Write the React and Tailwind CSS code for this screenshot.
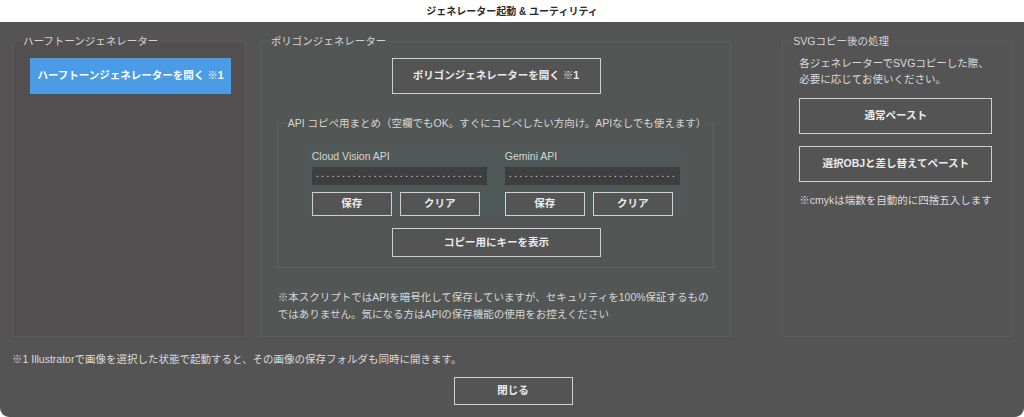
import React from 'react';

const font = { fontFamily: '"Liberation Sans", "Noto Sans CJK JP", sans-serif' };

const Btn = ({ children, className = '' }) => (
    <button className={`border border-[#cfcfcf] bg-[#545454] text-[10.5px] text-[#ececec] font-semibold flex items-center justify-center whitespace-nowrap ${className}`}>
        {children}
    </button>
);

const KeyField = ({ label }) => (
    <div className="w-[175px] flex flex-col">
        <div className="h-[19px] pt-[1px] text-[10.5px] text-[#d6d6d6] leading-[14px]">{label}</div>
        <div className="h-[18px] bg-[#3e3e3e] overflow-hidden whitespace-nowrap text-[11px] leading-[13px] text-[#d8d8d8] tracking-[2.2px] pl-[4px]">
            {'.'.repeat(32)}
        </div>
        <div className="flex gap-2 mt-[7px]">
            <Btn className="w-[80px] h-[24px]">保存</Btn>
            <Btn className="w-[80px] h-[24px]">クリア</Btn>
        </div>
    </div>
);

export default function App() {
    return (
        <div className="w-[1024px] h-[417px] bg-white overflow-hidden" style={font}>
            <div className="h-[22px] flex items-center justify-center text-[10px] font-bold text-[#2a2a2a]">
                ジェネレーター起動 &amp; ユーティリティ
            </div>
            <div className="h-[395px] bg-[#545454] rounded-b-[9px] px-3 pt-[12px] text-[#dcdcdc] text-[10.5px]">
                <div className="flex h-[303px]">
                    <fieldset className="w-[234px] border border-[#5e5a5b] bg-[#534f50]">
                        <legend className="ml-[9px] px-[1px] leading-[15px] text-[#d4d4d4]">ハーフトーンジェネレーター</legend>
                        <div className="pl-[17px] pt-[9px]">
                            <button className="w-[201px] h-[36px] bg-[#4b9be7] text-white font-semibold">
                                ハーフトーンジェネレーターを開く ※1
                            </button>
                        </div>
                    </fieldset>

                    <fieldset className="w-[472px] ml-[14px] border border-[#5c605f] bg-[#525655] flex flex-col">
                        <legend className="ml-[9px] px-[1px] leading-[15px] text-[#d4d4d4]">ポリゴンジェネレーター</legend>
                        <div className="flex justify-center pl-[1px] pt-[9px]">
                            <Btn className="w-[209px] h-[36px]">ポリゴンジェネレーターを開く ※1</Btn>
                        </div>
                        <fieldset className="mx-[16px] mt-[22px] h-[152px] border border-[#5f6463] flex flex-col">
                            <legend className="ml-[9px] px-[1px] leading-[15px] text-[#d6d6d6] whitespace-nowrap">
                                API コピペ用まとめ（空欄でもOK。すぐにコピペしたい方向け。APIなしでも使えます）
                            </legend>
                            <div className="ml-[27px] mt-[17px] w-[377px] h-[69px] bg-[#4f5958] pl-[7px] flex gap-[18px]">
                                <KeyField label="Cloud Vision API" />
                                <KeyField label="Gemini API" />
                            </div>
                            <div className="flex justify-center mt-[11px] pl-[2px]">
                                <Btn className="w-[209px] h-[29px]">コピー用にキーを表示</Btn>
                            </div>
                        </fieldset>
                        <p className="ml-[17px] mt-[21px] w-[445px] leading-[17px] text-[#d6d6d6] whitespace-nowrap">
                            ※本スクリプトではAPIを暗号化して保存していますが、セキュリティを100%保証するもの<br />ではありません。気になる方はAPIの保存機能の使用をお控えください
                        </p>
                    </fieldset>

                    <fieldset className="w-[230px] ml-[51px] border border-[#5c5c5c] bg-[#545454]">
                        <legend className="ml-[9px] px-[1px] leading-[15px] text-[#d4d4d4]">SVGコピー後の処理</legend>
                        <div className="px-[16px] pt-[6px]">
                            <p className="leading-[16px] text-[#dcdcdc] whitespace-nowrap">
                                各ジェネレーターでSVGコピーした際、<br />必要に応じてお使いください。
                            </p>
                            <Btn className="w-[193px] h-[36px] mt-[11px]">通常ペースト</Btn>
                            <Btn className="w-[193px] h-[36px] mt-[12px]">選択OBJと差し替えてペースト</Btn>
                            <p className="mt-[11px] leading-[14px] text-[#dcdcdc] whitespace-nowrap">※cmykは端数を自動的に四捨五入します</p>
                        </div>
                    </fieldset>
                </div>
                <p className="mt-[15px] leading-[14px] text-[#dcdcdc]">
                    ※1 Illustratorで画像を選択した状態で起動すると、その画像の保存フォルダも同時に開きます。
                </p>
                <div className="flex justify-center mt-[11px] pl-[2px]">
                    <Btn className="w-[119px] h-[28px]">閉じる</Btn>
                </div>
            </div>
        </div>
    );
}
